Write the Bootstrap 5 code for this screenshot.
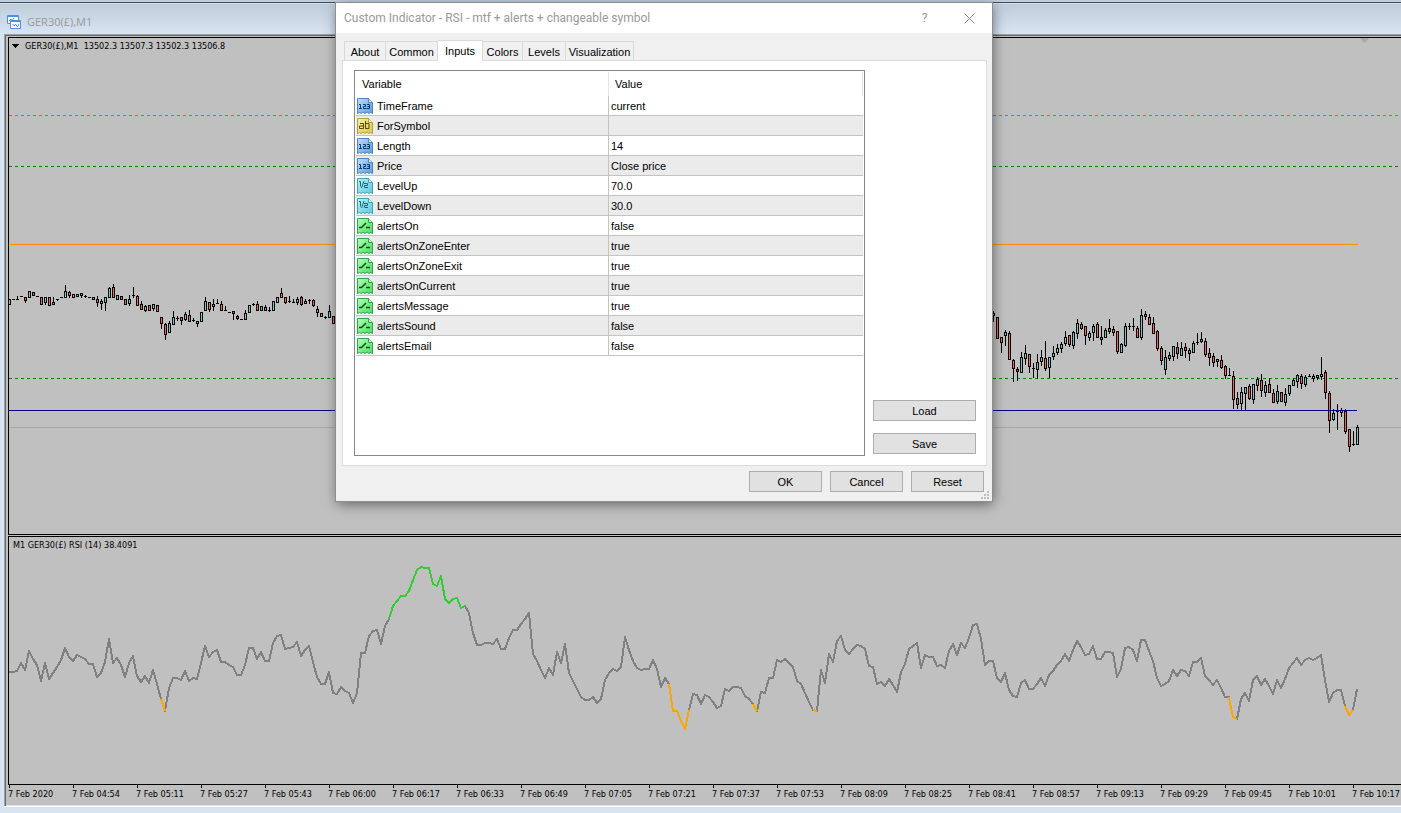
<!DOCTYPE html>
<html lang="en">
<head>
<meta charset="utf-8">
<meta name="viewport" content="width=device-width, initial-scale=1">
<title>GER30(£),M1</title>
<link href="https://cdn.jsdelivr.net/npm/bootstrap@5.3.0/dist/css/bootstrap.min.css" rel="stylesheet">
<style>
  body { background: #d7e4f2; font-family: "Liberation Sans", Arial, sans-serif; font-size: 11px; line-height: 14px; color: #000; }
  .app-strip { height: 3px; background: #bdcfdf; border-bottom: 1px solid #4d4d4d; }
  .doc-title { height: 31px; padding: 6px 8px 0 7px; gap: 6px; background: linear-gradient(#e4ecf4 0, #bfcddb 1px, #d7e4f2); color: #999; font: 11px/24px "Open Sans", sans-serif; }
  .doc-frame { margin-left: 4px; margin-bottom: 7px; padding: 2px 0 1px 3px; background: #c0c0c0; border: solid #a0a0a0; border-width: 1px 0 0 1px; box-shadow: inset 1px 1px #696969, inset 0 -1px #e3e3e3, 0 1px #fff; }
  .chart-text { font: 9px/12px "DejaVu Sans Condensed", "DejaVu Sans", sans-serif; }
  .pane { border: solid #000; border-width: 1px 0 1px 1px; min-height: 0; }
  .pane svg { display: block; width: 100%; height: 100%; }
  .pane-label { position: absolute; left: 4px; top: 2px; white-space: pre; }
  .rsi-pane { height: 249px; margin-top: 1px; flex: none; }
  .time-axis { height: 20px; flex: none; overflow: hidden; }
  .time-axis span { flex: 0 0 64px; position: relative; padding-top: 3px; white-space: nowrap; }
  .time-axis span::before { content: ""; position: absolute; left: 1px; top: 0; height: 3px; border-left: 1px solid #000; }

  .dlg { position: absolute; left: 336px; top: 3px; width: 656px; background: #f0f0f0; box-shadow: 0 0 0 1px #8e8e8e, 1px 3px 12px rgba(0,0,0,.5); }
  .dlg-title { height: 30px; padding-left: 8px; background: #fff; color: #999; font: 12px/30px Roboto, sans-serif; }
  .dlg-title button { border: 0; background: none; color: #999; width: 45px; padding: 0; font: inherit; }
  .tabs { padding: 7px 8px 0; height: 27px; }
  .tabs button { height: 19px; border: 1px solid #d9d9d9; border-width: 1px 1px 0 0; background: #f0f0f0; padding: 1px 0 0; line-height: 18px; color: #000; text-align: center; }
  .tabs button:first-child { border-left-width: 1px; }
  .tabs .on { height: 21px; background: #fff; position: relative; padding: 0; margin-bottom: -1px; }
  .tab-body { margin: 0 5px 0 6px; padding: 9px 10px 9px 11px; background: #fff; border: 1px solid #dcdcdc; height: 406px; }
  .list-box { border: 1px solid #828790; flex: 0 0 511px; padding: 1px; }
  .inputs { width: 100%; table-layout: fixed; border-collapse: separate; border-spacing: 0; }
  .inputs th { height: 24px; font-weight: 400; padding: 0 6px; border-right: 1px solid #e5e5e5; vertical-align: middle; }
  .inputs td { height: 20px; padding: 0 2px; border-bottom: 1px solid #c4c4c4; vertical-align: middle; white-space: nowrap; }
  .inputs td:first-child { border-right: 1px solid #c4c4c4; padding-left: 1px; }
  .inputs tr:nth-child(even) td { background: #ebebeb; }
  .inputs td svg { width: 16px; height: 16px; margin-right: 4px; vertical-align: -4px; }
  .push { height: 21px; background: #e1e1e1; border: 1px solid #adadad; color: #000; padding: 1px 0 0; line-height: 18px; }
  .push.wide { width: 103px; }
  .push.std { width: 73px; }
  .file-buttons { gap: 12px; padding-bottom: 2px; }
  .dlg-foot { padding: 5px 8px 9px; position: relative; gap: 8px; }
  .grip { position: absolute; right: 3px; bottom: 2px; }
</style>
</head>
<body class="vh-100 d-flex flex-column overflow-hidden position-relative">

<div class="app-strip flex-shrink-0"></div>
<header class="doc-title d-flex align-items-center flex-shrink-0">
  <svg width="14" height="14" viewBox="0 0 14 14" fill="#fff" stroke="#4d90dc">
    <path d="M.5.5h11v8H.5z"/><path d="M1 1.500h10"/><path d="M2 6l2-2 1 2 2-3" fill="none"/>
    <path d="M3.500 5.500h10v8h-10z"/><path d="M4 6.500h9"/><path d="M5.500 9l2 2 1-2 2 3 1.500-3" fill="none"/>
  </svg>
  <span>GER30(£),M1</span>
</header>

<main class="doc-frame d-flex flex-column flex-grow-1 overflow-hidden chart-text">
  <section class="pane position-relative flex-grow-1">
    <svg id="price" shape-rendering="crispEdges" aria-label="Price chart">
      <path d="M0 77.500H1392" stroke="#1e90ff" stroke-dasharray="3 3"/>
      <path d="M0 128.500H1392M0 340.500H1392" stroke="#008000" stroke-dasharray="3 3"/>
      <path d="M0 206.500H1349" stroke="#ff8c00"/>
      <path d="M0 389.500H1392" stroke="#a9a9a9"/>
      <path d="M1351 0h9l-4.500 5z" fill="#a9a9a9"/>
      <path d="M3 6h7l-3.500 4z"/>
      <g id="candles"></g>
      <path d="M0 372.500H1348" stroke="#00008b"/>
    </svg>
    <div class="pane-label ps-2"><span class="ps-1">GER30(£),M1  13502.3 13507.3 13502.3 13506.8</span></div>
  </section>
  <section class="pane rsi-pane position-relative">
    <svg id="rsi" aria-label="RSI indicator" fill="none" stroke-width="2" stroke-linejoin="round" shape-rendering="crispEdges"></svg>
    <div class="pane-label">M1 GER30(£) RSI (14) 38.4091</div>
  </section>
  <div class="time-axis d-flex">
    <span>7 Feb 2020</span><span>7 Feb 04:54</span><span>7 Feb 05:11</span><span>7 Feb 05:27</span><span>7 Feb 05:43</span><span>7 Feb 06:00</span><span>7 Feb 06:17</span><span>7 Feb 06:33</span><span>7 Feb 06:49</span><span>7 Feb 07:05</span><span>7 Feb 07:21</span><span>7 Feb 07:37</span><span>7 Feb 07:53</span><span>7 Feb 08:09</span><span>7 Feb 08:25</span><span>7 Feb 08:41</span><span>7 Feb 08:57</span><span>7 Feb 09:13</span><span>7 Feb 09:29</span><span>7 Feb 09:45</span><span>7 Feb 10:01</span><span>7 Feb 10:17</span>
  </div>
</main>

<div class="dlg" role="dialog" aria-labelledby="dlgTitle">
  <div class="dlg-title d-flex">
    <span id="dlgTitle" class="flex-grow-1">Custom Indicator - RSI - mtf + alerts + changeable symbol</span>
    <button type="button" aria-label="Help">?</button>
    <button type="button" aria-label="Close"><svg width="11" height="11" viewBox="0 0 11 11" stroke="#8a8a8a"><path d="M.5.5l10 10M10.500.5l-10 10"/></svg></button>
  </div>
  <div class="tabs d-flex align-items-end" role="tablist">
    <button type="button" role="tab" style="width:42px">About</button>
    <button type="button" role="tab" style="width:52px">Common</button>
    <button type="button" role="tab" class="on" aria-selected="true" style="width:45px">Inputs</button>
    <button type="button" role="tab" style="width:40px">Colors</button>
    <button type="button" role="tab" style="width:43px">Levels</button>
    <button type="button" role="tab" style="width:68px">Visualization</button>
  </div>
  <div class="tab-body d-flex justify-content-between">
    <div class="list-box">
      <table class="inputs">
        <colgroup><col style="width:253px"><col></colgroup>
        <thead><tr><th scope="col">Variable</th><th scope="col">Value</th></tr></thead>
        <tbody>
          <tr><td><svg><use href="#i-int"/></svg>TimeFrame</td><td>current</td></tr>
          <tr><td><svg><use href="#i-str"/></svg>ForSymbol</td><td></td></tr>
          <tr><td><svg><use href="#i-int"/></svg>Length</td><td>14</td></tr>
          <tr><td><svg><use href="#i-int"/></svg>Price</td><td>Close price</td></tr>
          <tr><td><svg><use href="#i-dbl"/></svg>LevelUp</td><td>70.0</td></tr>
          <tr><td><svg><use href="#i-dbl"/></svg>LevelDown</td><td>30.0</td></tr>
          <tr><td><svg><use href="#i-bool"/></svg>alertsOn</td><td>false</td></tr>
          <tr><td><svg><use href="#i-bool"/></svg>alertsOnZoneEnter</td><td>true</td></tr>
          <tr><td><svg><use href="#i-bool"/></svg>alertsOnZoneExit</td><td>true</td></tr>
          <tr><td><svg><use href="#i-bool"/></svg>alertsOnCurrent</td><td>true</td></tr>
          <tr><td><svg><use href="#i-bool"/></svg>alertsMessage</td><td>true</td></tr>
          <tr><td><svg><use href="#i-bool"/></svg>alertsSound</td><td>false</td></tr>
          <tr><td><svg><use href="#i-bool"/></svg>alertsEmail</td><td>false</td></tr>
        </tbody>
      </table>
    </div>
    <div class="file-buttons d-flex flex-column justify-content-end">
      <button type="button" class="push wide">Load</button>
      <button type="button" class="push wide">Save</button>
    </div>
  </div>
  <div class="dlg-foot d-flex justify-content-end">
    <button type="button" class="push std">OK</button>
    <button type="button" class="push std">Cancel</button>
    <button type="button" class="push std">Reset</button>
    <svg class="grip" width="8" height="8" fill="#bfbfbf"><path d="M6 0h2v2H6zM3 3h2v2H3zM6 3h2v2H6zM0 6h2v2H0zM3 6h2v2H3zM6 6h2v2H6z"/></svg>
  </div>
</div>

<svg width="0" height="0" class="position-absolute">
  <defs>
    <linearGradient id="gInt" x2="1" y2="1"><stop stop-color="#bfe0ff"/><stop offset="1" stop-color="#5a9ad8"/></linearGradient>
    <linearGradient id="gStr" x2="1" y2="1"><stop stop-color="#f7efa8"/><stop offset="1" stop-color="#d9c64a"/></linearGradient>
    <linearGradient id="gDbl" x2="1" y2="1"><stop stop-color="#b5f1f8"/><stop offset="1" stop-color="#5fc9dc"/></linearGradient>
    <linearGradient id="gBool" x2="1" y2="1"><stop stop-color="#b0ffb4"/><stop offset="1" stop-color="#48dc60"/></linearGradient>
    <path id="sheet" d="M.5.5h11l4 4v11l-2-1-1.500 1-2-1.500-2 1.500-2-1.500-2 1.500-1.500-1-2 1z"/>
    <symbol id="i-int" viewBox="0 0 16 16"><use href="#sheet" fill="url(#gInt)" stroke="#4b86c2"/><path d="M11.500.5v4h4" fill="#d6ebff" stroke="#4b86c2"/><path d="M2 6.500h1.500v4M2 10.500h3M6 6.500h2.500v2h-2v2h3M10 6.500h2.500v4h-2.500M10.500 8.500h2" fill="none" stroke="#0a3a70"/></symbol>
    <symbol id="i-str" viewBox="0 0 16 16"><use href="#sheet" fill="url(#gStr)" stroke="#b3a135"/><path d="M11.500.5v4h4" fill="#fdf8d0" stroke="#b3a135"/><path d="M3 5.500h3.500v5h-4v-2.500h4M8.500 3v7.500h3.500v-5h-3.500" fill="none" stroke="#5a4c00"/></symbol>
    <symbol id="i-dbl" viewBox="0 0 16 16"><use href="#sheet" fill="url(#gDbl)" stroke="#3fa3b8"/><path d="M11.500.5v4h4" fill="#d8f8fc" stroke="#3fa3b8"/><path d="M2 3.500h1.500v5M7 3l-2.500 7M7 5.500h3.500v2h-3v2h3.500" fill="none" stroke="#1b6878"/></symbol>
    <symbol id="i-bool" viewBox="0 0 16 16"><use href="#sheet" fill="url(#gBool)" stroke="#2fa548"/><path d="M11.500.5v4h4" fill="#d5ffd8" stroke="#2fa548"/><path d="M2 9.500h2.500L9 5M9 9.500h4" fill="none" stroke="#064d14" stroke-width="1.500"/></symbol>
  </defs>
</svg>

<script src="https://cdn.jsdelivr.net/npm/bootstrap@5.3.0/dist/js/bootstrap.bundle.min.js"></script>
<script>
// One bar every 4 px. Levels are counted downwards in ticks, three ticks to a pixel.
const STEP = 4, TICKS = 3;

// Bars: "u" rising or "d" falling with open/close edges, then high and low; "n" is a doji (level, high, low).
const bars = [
  { first: 0, top: 232, rows: "u88,103 n88 n88,79,90 n80 d82,90,82,98 u64,82 d67,77 n80 d82,104 u82,98,82,103 d82,106 u97,104,83,104 n89,87,95 n81 u64,83,45,83 d67,77,64,82 d73,82 u73,80 d70,77,70,82 n79,76,84 n82 u82,89 d88,98,80,109 u94,101,88,117 u82,97,82,122 u55,82,52,82 d52,82,43,82 u76,89 d79,89 d88,104 u88,101,76,107 n77,52,84 d79,107,76,107 d103,119,94,119 u109,122,106,125 d106,122 u103,115,103,122 d106,125 d142,161,142,176 d163,193,160,209 u160,188,154,188 u142,164,124,164 n146,140,155 d142,150,142,164 u133,149,128,152 d136,154,120,154 n151,146,156 u154,161,154,170 u127,154 u94,122,81,122 d97,119,97,124 u103,110,88,122 n100,88,104 d103,122,94,122 n121,109,122 n127 d124,131,124,149 d139,146,136,149 n147 u130,149,122,149 u106,128 n104,100,108 d103,122,94,122 u109,122 d112,122,106,122 n120,112,128 u94,122 u82,98 d70,83,55,83 d82,98,82,101 n94,79,100 n97,88,101 u88,98,82,104 d82,104,80,107 u94,101,88,101 n90,88,102 d91,107,87,110 d118,128,109,140 d130,140 n141,138,149 u124,142,106,142 d139,161" },
  { first: 246, top: 252, rows: "d70,76,64,95 d82,145 d142,158,142,188 u127,137,121,167 d130,209,124,209 d211,236,208,275 d238,245,232,272 u202,248,187,248 u190,206,166,224 d193,230,193,248 n234,220,266 u217,239,193,265 u202,215,181,227 d205,236,154,242 u202,233,202,262 u190,200,169,209 u175,188,163,194 u163,176,157,188 u142,161,124,165 d136,164,136,170 u127,167,124,176 u100,131,88,144 d103,114,96,117 d109,137,109,164 u130,143,124,152 u109,128,103,150 d103,143,96,143 u142,149,109,164 u121,143,115,143 d115,125,88,131 d118,128,109,137 d124,185,124,191 u163,188,160,188 u109,167,100,170 n109,99,122 n110,84,125 d115,143,109,143 u76,143,58,149 d73,80,64,88 d82,104,73,104 d100,131,82,131 d124,176,121,182 d175,212,169,224 u202,239,181,254 u196,206,187,212 u169,200,169,212 d172,191,157,206 u175,197,157,197 d172,182,160,203 d181,191,175,212 u160,188,154,188 n157,130,166 u148,155,127,158 d154,194,145,200 d190,203,175,227 d199,218,190,230 u208,215,208,230 d211,233,197,236 d229,257,226,266 n256,236,260 d259,329,244,356 d325,344,307,356 u307,341,292,359 u292,311,292,357 d289,326,283,329 u283,329,283,341 u268,287,262,302 d271,302,253,320 u286,308,274,320 d283,308,265,308 d310,338,298,338 u304,335,286,341 d307,335 u313,338,295,347 u286,311,286,315 u271,287,265,287 u256,275,252,293 d259,281,253,296 u262,284,256,290 n258,253,263 u259,266,253,275 u256,263,256,269 u253,260,202,269 d247,308,241,326 d310,392,305,428 u370,389,358,392 n365,343,422 u361,368,355,380 d364,425,358,431 d418,470,418,485 n462,424,470 u412,464,406,464" }
];
let out = "";
for (const run of bars) run.rows.split(" ").forEach((row, i) => {
  const x = (run.first + i) * STEP, y = t => run.top + Math.floor(t / TICKS);
  const v = row.slice(1).split(",").map(Number);
  if (row[0] === "n") {
    out += `<path d="M${x - 1} ${y(v[0])}h3v1h-3z"/>`;
    if (v.length > 1) out += `<path d="M${x} ${y(v[1])}h1V${y(v[2])}h-1z"/>`;
    return;
  }
  const [a, b, hi = a, lo = b] = v;
  out += `<path d="M${x} ${y(hi)}h1V${y(lo) + 1}h-1zM${x - 1} ${y(a)}h3V${y(b) + 1}h-3z"/>` +
         `<path d="M${x} ${y(a) + 1}h1V${y(b)}h-1z" fill="${row[0] === "u" ? "#40e0d0" : "#ff6347"}"/>`;
});
document.getElementById("candles").innerHTML = out;

// RSI curve, in four stretches of the session.
const rsi = [];
const add = (first, top, values) => values.forEach((v, i) => rsi[first + i] = Math.round(top + v / TICKS));
add(0, -7, [426,426,423,398,420,362,388,406,453,398,447,428,411,391,355,380,394,374,380,387,402,402,441,430,396,328,399,384,406,441,400,377,438,457,439,459,420,462,508,543,475,443,444,450,422,454,444,446,400,347,382,365,359,396,397,404,411,435,435,406,354,353,387,365,392,393,338,317,314,357,353,351,335,379,360,347,396,442,462,461,426,488,493]);
add(83, 13, [410,424,430,459,429,310,308,257,242,239,283,228,206,167,154,138,137,123,90,61,50,54,55,103,108,78,148,159,148,143,174,168,190,250,285,285,279,279,282,267,297,297,264,241,240,222,207,188,313,332,360,384,353,376,305,340,281,370,394,418,441,449,450,440,459,446,391,370,356,363,352,260,300,334,355,359,357,358,331,358,411,383,403,483,483,512,538,481]);
add(171, 63, [281,285,312,284,290,305,325,319,267,272,261,261,263,289,298,313,333,276,278,235,233,179,186,177,190,200,244,253,280,306,329,332,209,250,161,186,122,107,151,163,147,134,138,146,198,200,252,245,258,236,256,276,215,192,146,137,129,205,165,171,172,198,196,204,152,131,165,128,143,113,75,71,118,195,183,184,235,245,219,270,288,292,250,240,267,267,252]);
add(258, 63, [234,258,224,212,194,182,162,184,149,122,140,165,162,138,177,177,156,157,160,232,208,143,141,151,184,119,120,152,183,233,258,252,244,209,229,210,212,228,186,186,174,227,239,256,240,264,290,292,350,357,298,279,302,241,228,256,236,258,282,240,264,236,204,189,174,195,179,173,180,174,165,239,305,278,270,269,319,346,330,268]);
const line = (from, to, colour) => {
  const pts = rsi.slice(from, to + 1).map((y, i) => `${(from + i) * STEP},${y}`).join(" ");
  return `<polyline points="${pts}" stroke="${colour}"/>`;
};
document.getElementById("rsi").innerHTML = line(0, rsi.length - 1, "#808080") + line(95, 114, "#32cd32") +
  [[38, 39], [165, 170], [186, 187], [201, 202], [305, 307], [334, 336]].map(([a, b]) => line(a, b, "#ffa500")).join("");
</script>
</body>
</html>
